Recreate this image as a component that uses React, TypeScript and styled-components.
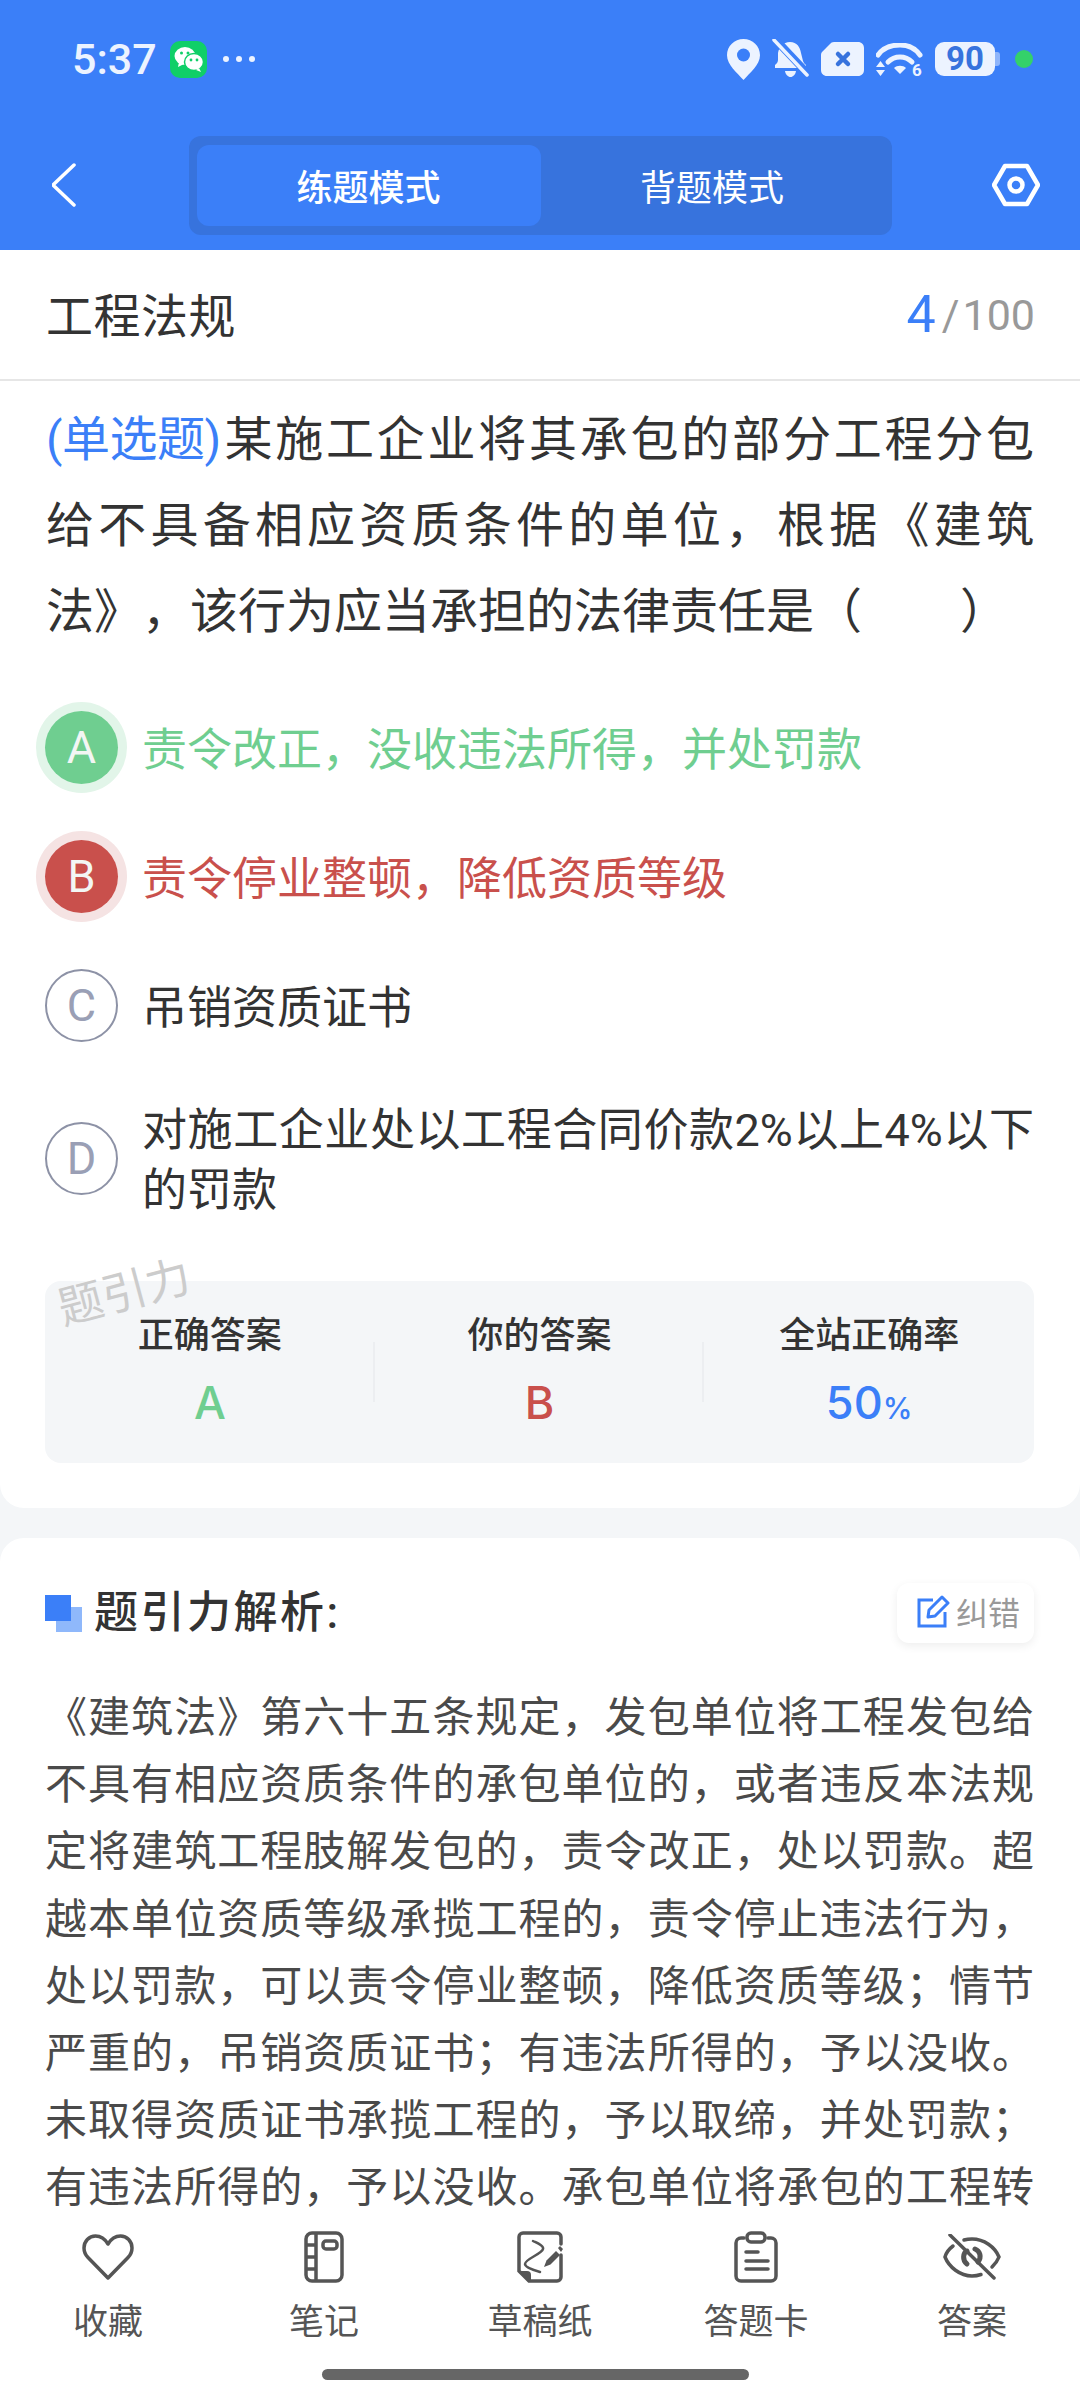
import React from 'react'
import styled, { createGlobalStyle } from 'styled-components'

const BLUE = '#3b7ff8'
const GREEN = '#6fce90'
const RED = '#c9504c'
const INK = '#333333'
const ICON_LIGHT = '#ecf3ff'

const GlobalStyle = createGlobalStyle`
  html, body {
    margin: 0;
    padding: 0;
    background: #f4f6f8;
    font-family: Roboto, "Noto Sans CJK SC", sans-serif;
    text-spacing-trim: space-all;
  }
  * {
    box-sizing: border-box;
  }
`

type OptionState = 'right' | 'wrong' | 'idle'

const options: { key: string; text: string; state: OptionState }[] = [
  { key: 'A', text: '责令改正，没收违法所得，并处罚款', state: 'right' },
  { key: 'B', text: '责令停业整顿，降低资质等级', state: 'wrong' },
  { key: 'C', text: '吊销资质证书', state: 'idle' },
  { key: 'D', text: '对施工企业处以工程合同价款2%以上4%以下的罚款', state: 'idle' },
]

const analysis =
  '《建筑法》第六十五条规定，发包单位将工程发包给不具有相应资质条件的承包单位的，或者违反本法规定将建筑工程肢解发包的，责令改正，处以罚款。超越本单位资质等级承揽工程的，责令停止违法行为，处以罚款，可以责令停业整顿，降低资质等级；情节严重的，吊销资质证书；有违法所得的，予以没收。未取得资质证书承揽工程的，予以取缔，并处罚款；有违法所得的，予以没收。承包单位将承包的工程转'

export default function App() {
  return (
    <Page>
      <GlobalStyle />
      <Header>
        <StatusBar>
          <StatusLeft>
            <Clock>5:37</Clock>
            <WeChatBadge>
              <svg width="30" height="26" viewBox="0 0 30 26">
                <ellipse cx="11" cy="10" rx="10.5" ry="9" fill="#fff" />
                <path d="M5 16l-1 5 6-3z" fill="#fff" />
                <ellipse cx="20" cy="16" rx="9.5" ry="8.5" fill="#fff" stroke="#10cf68" strokeWidth="1.5" />
                <path d="M25 22l2 4-5-2z" fill="#fff" />
                <circle cx="7.5" cy="7" r="1.5" fill="#10cf68" />
                <circle cx="14" cy="7" r="1.5" fill="#10cf68" />
                <circle cx="17" cy="14" r="1.4" fill="#10cf68" />
                <circle cx="23" cy="14" r="1.4" fill="#10cf68" />
              </svg>
            </WeChatBadge>
            <Dots>
              <i />
              <i />
              <i />
            </Dots>
          </StatusLeft>
          <StatusRight>
            <svg width="33" height="41" viewBox="0 0 33 41">
              <path
                d="M16.5 0C7.4 0 0 7.2 0 16.2 0 26 10.500 34 16.500 41 22.500 34 33 26 33 16.200 33 7.200 25.600 0 16.500 0z"
                fill={ICON_LIGHT}
              />
              <circle cx="16.500" cy="16" r="6.500" fill={BLUE} />
            </svg>
            <svg width="37" height="40" viewBox="0 0 37 40">
              <path
                d="M18 3c7 0 10 5 11 11l2 8c.6 2 2 3 3 4v3H3v-3c1.500-1 3-3 3-5V14C7 8 11 3 18 3z"
                fill={ICON_LIGHT}
              />
              <path d="M13 32h11c-.5 3.500-3 6-5.500 6S13.500 35.500 13 32z" fill={ICON_LIGHT} />
              <path d="M2 -1L37 36" stroke={BLUE} strokeWidth="8" />
              <path d="M2 1L35 36" stroke={ICON_LIGHT} strokeWidth="3.500" strokeLinecap="round" />
            </svg>
            <svg width="43" height="34" viewBox="0 0 43 34">
              <path
                d="M9 2C10 .8 11 0 13 0h24c3.500 0 6 2.500 6 6v22c0 3.500-2.500 6-6 6H6c-3.500 0-6-2.500-6-6V13c0-1.500.5-2.500 1.500-3.500z"
                fill={ICON_LIGHT}
              />
              <path
                d="M17 12l10 10M27 12L17 22"
                stroke="#3773dd"
                strokeWidth="4.500"
                strokeLinecap="round"
              />
            </svg>
            <svg width="47" height="33" viewBox="0 0 47 33">
              <path d="M2 12C7 5 15 2 24 2s15 3 20 10" fill="none" stroke={ICON_LIGHT} strokeWidth="5" strokeLinecap="round" />
              <path d="M12 19c3-3 7-5 12-5s9 2 12 5" fill="none" stroke={ICON_LIGHT} strokeWidth="5" strokeLinecap="round" />
              <path d="M18 25c3-3 9-3 12 0l-6 6z" fill={ICON_LIGHT} />
              <path d="M4 18l4.500 6h-9zM4 33l4.500-6h-9z" transform="translate(0.500 0)" fill={ICON_LIGHT} />
              <text x="36" y="33" fontFamily="Roboto, sans-serif" fontSize="17" fontWeight="700" fill={ICON_LIGHT}>
                6
              </text>
            </svg>
            <BatteryWrap>
              <Battery>90</Battery>
              <BatteryNub />
            </BatteryWrap>
            <GreenDot />
          </StatusRight>
        </StatusBar>
        <NavBar>
          <NavIcon>
            <svg width="24" height="44" viewBox="0 0 24 44">
              <path d="M22 2L1 22l21 20" fill="none" stroke="#fff" strokeWidth="3.500" strokeLinecap="round" strokeLinejoin="round" />
            </svg>
          </NavIcon>
          <Tabs>
            <Tab $active>练题模式</Tab>
            <Tab>背题模式</Tab>
          </Tabs>
          <NavIcon>
            <svg width="48" height="44" viewBox="0 0 48 44">
              <path d="M13 3h22l11 19-11 19H13L2 22z" fill="none" stroke="#fff" strokeWidth="4.500" strokeLinejoin="round" />
              <circle cx="24" cy="22" r="6.500" fill="none" stroke="#fff" strokeWidth="4.500" />
            </svg>
          </NavIcon>
        </NavBar>
      </Header>

      <Scroller>
        <QuestionCard>
          <SubjectRow>
            <SubjectTitle>工程法规</SubjectTitle>
            <Counter>
              <CounterNow>4</CounterNow>
              <CounterRest>
                <CounterSlash>/</CounterSlash>100
              </CounterRest>
            </Counter>
          </SubjectRow>
          <QuestionText>
            <QuestionType>(单选题)</QuestionType>
            某施工企业将其承包的部分工程分包给不具备相应资质条件的单位，根据《建筑法》，该行为应当承担的法律责任是（&emsp;&emsp;）
          </QuestionText>
          <OptionList>
            {options.map((o) => (
              <OptionRow key={o.key}>
                <OptionBadge $state={o.state}>{o.key}</OptionBadge>
                <OptionText $state={o.state}>{o.text}</OptionText>
              </OptionRow>
            ))}
          </OptionList>
          <Stats>
            <Watermark>题引力</Watermark>
            <StatCell>
              <StatLabel>正确答案</StatLabel>
              <StatValue $color={GREEN}>A</StatValue>
            </StatCell>
            <StatCell>
              <StatLabel>你的答案</StatLabel>
              <StatValue $color={RED}>B</StatValue>
            </StatCell>
            <StatCell>
              <StatLabel>全站正确率</StatLabel>
              <StatValue $color={BLUE}>
                50<Percent>%</Percent>
              </StatValue>
            </StatCell>
          </Stats>
        </QuestionCard>

        <AnalysisCard>
          <AnalysisHead>
            <HeadLeft>
              <svg width="37" height="37" viewBox="0 0 37 37">
                <rect x="11" y="12" width="26" height="25" fill="#8fb8fb" />
                <rect x="0" y="0" width="26" height="26" fill={BLUE} />
              </svg>
              <HeadTitle>题引力解析:</HeadTitle>
            </HeadLeft>
            <ReportButton>
              <svg width="33" height="33" viewBox="0 0 33 33">
                <path d="M16 5H2v26h26V17" fill="none" stroke={BLUE} strokeWidth="3" />
                <path d="M11 22l1-7L25 2l6 6-13 13z" fill="none" stroke={BLUE} strokeWidth="3" strokeLinejoin="round" />
              </svg>
              纠错
            </ReportButton>
          </AnalysisHead>
          <AnalysisText>{analysis}</AnalysisText>
        </AnalysisCard>
      </Scroller>

      <BottomBar>
        <BottomItems>
          <BottomItem>
            <IconSlot>
              <svg width="52" height="46" viewBox="0 0 52 46">
                <path
                  d="M26 10C23 5 18 2 13.500 2 7 2 2 7.500 2 14c0 4 1.500 7 4 9.500L26 44l20-20.500c2.500-2.500 4-5.500 4-9.500 0-6.500-5-12-11.500-12C34 2 29 5 26 10z"
                  fill="none"
                  stroke="#555"
                  strokeWidth="3.500"
                  strokeLinejoin="round"
                />
              </svg>
            </IconSlot>
            <BottomLabel>收藏</BottomLabel>
          </BottomItem>
          <BottomItem>
            <IconSlot>
              <svg width="40" height="52" viewBox="0 0 40 52">
                <rect x="2" y="2" width="36" height="48" rx="6" fill="none" stroke="#555" strokeWidth="3.500" />
                <path d="M12 2v48M2 14h10M2 26h10M2 38h10" fill="none" stroke="#555" strokeWidth="3.500" />
                <rect x="19" y="10" width="14" height="8" rx="3" fill="none" stroke="#555" strokeWidth="3.500" />
              </svg>
            </IconSlot>
            <BottomLabel>笔记</BottomLabel>
          </BottomItem>
          <BottomItem>
            <IconSlot>
              <svg width="46" height="52" viewBox="0 0 46 52">
                <path d="M44 13V6a4 4 0 0 0-4-4H6a4 4 0 0 0-4 4v34l10 10h28a4 4 0 0 0 4-4V24" fill="none" stroke="#555" strokeWidth="3.500" strokeLinecap="round" />
                <path d="M2 40h8a4 4 0 0 1 4 4v7z" fill="#555" />
                <path d="M16 10c6 3 11 5 10 8-1 5-18 10-18 15 0 3 8 6 15 8" fill="none" stroke="#555" strokeWidth="2.500" strokeLinecap="round" />
                <path d="M27 36l2.500-6.500L39 20l4 4-9.500 9.500z" fill="#555" />
                <path d="M41 17l2-2 3 3-2 3z" fill="#555" />
              </svg>
            </IconSlot>
            <BottomLabel>草稿纸</BottomLabel>
          </BottomItem>
          <BottomItem>
            <IconSlot>
              <svg width="44" height="52" viewBox="0 0 44 52">
                <path d="M10 7H7a5 5 0 0 0-5 5v33a5 5 0 0 0 5 5h30a5 5 0 0 0 5-5V12a5 5 0 0 0-5-5h-3" fill="none" stroke="#555" strokeWidth="3.500" strokeLinecap="round" />
                <rect x="13" y="2" width="18" height="9" rx="4" fill="none" stroke="#555" strokeWidth="3.500" />
                <path d="M12 21h12M12 30h22M12 38h22" fill="none" stroke="#555" strokeWidth="3.500" strokeLinecap="round" />
              </svg>
            </IconSlot>
            <BottomLabel>答题卡</BottomLabel>
          </BottomItem>
          <BottomItem>
            <IconSlot>
              <svg width="58" height="46" viewBox="0 0 58 46">
                <path d="M10 12C6 15 3 19 2 23c4 10 15 19 27 19 3 0 6-.5 9-1.500" fill="none" stroke="#555" strokeWidth="3.500" strokeLinecap="round" />
                <path d="M21 6c2.500-.7 5-1 8-1 12 0 23 8 27 18-1.500 4-4 7-7 10" fill="none" stroke="#555" strokeWidth="3.500" strokeLinecap="round" />
                <path d="M24 17c-4 2-5 9 0 13M32 15c5 2 7 8 3 13" fill="none" stroke="#555" strokeWidth="5" strokeLinecap="round" />
                <path d="M7 1l44 43" fill="none" stroke="#555" strokeWidth="3.500" strokeLinecap="round" />
              </svg>
            </IconSlot>
            <BottomLabel>答案</BottomLabel>
          </BottomItem>
        </BottomItems>
        <HomeIndicator />
      </BottomBar>
    </Page>
  )
}

const Page = styled.div`
  width: 1080px;
  height: 2400px;
  display: flex;
  flex-direction: column;
  overflow: hidden;
  background: #f4f6f8;
`

const Header = styled.header`
  flex: 0 0 250px;
  background: ${BLUE};
`

const StatusBar = styled.div`
  height: 120px;
  padding: 0 47px 2px 72px;
  display: flex;
  align-items: center;
  justify-content: space-between;
`

const StatusLeft = styled.div`
  display: flex;
  align-items: center;
`

const Clock = styled.span`
  width: 98px;
  font-size: 43px;
  font-weight: 500;
  color: ${ICON_LIGHT};
`

const WeChatBadge = styled.div`
  width: 37px;
  height: 37px;
  border-radius: 10px;
  background: #10cf68;
  display: flex;
  align-items: center;
  justify-content: center;
`

const Dots = styled.div`
  margin-left: 16px;
  display: flex;
  gap: 7px;

  i {
    width: 6px;
    height: 6px;
    border-radius: 50%;
    background: ${ICON_LIGHT};
  }
`

const StatusRight = styled.div`
  display: flex;
  align-items: center;
  gap: 12px;
`

const BatteryWrap = styled.div`
  display: flex;
  align-items: center;
`

const Battery = styled.div`
  width: 60px;
  height: 34px;
  border-radius: 9px;
  background: ${ICON_LIGHT};
  color: #3773dd;
  font-size: 33px;
  font-weight: 700;
  line-height: 34px;
  text-align: center;
`

const BatteryNub = styled.div`
  width: 5px;
  height: 14px;
  border-radius: 0 3px 3px 0;
  background: #8fb5fa;
`

const GreenDot = styled.div`
  margin-left: 3px;
  width: 18px;
  height: 18px;
  border-radius: 50%;
  background: #34d16a;
`

const NavBar = styled.div`
  height: 130px;
  padding: 0 40px;
  display: flex;
  align-items: center;
  justify-content: space-between;
`

const NavIcon = styled.div`
  width: 48px;
  display: flex;
  justify-content: center;
`

const Tabs = styled.div`
  width: 703px;
  height: 99px;
  padding: 9px 8px;
  border-radius: 12px;
  background: #3773dd;
  display: grid;
  grid-template-columns: 344px 1fr;
`

const Tab = styled.div<{ $active?: boolean }>`
  border-radius: 12px;
  background: ${(p) => (p.$active ? BLUE : 'transparent')};
  color: #fff;
  font-size: 36px;
  font-weight: ${(p) => (p.$active ? 500 : 400)};
  display: flex;
  align-items: center;
  justify-content: center;
`

const Scroller = styled.main`
  flex: 1;
  min-height: 0;
  overflow: hidden;
`

const QuestionCard = styled.section`
  background: #fff;
  border-radius: 0 0 24px 24px;
  padding-bottom: 45px;
`

const SubjectRow = styled.div`
  height: 131px;
  padding: 0 45px 4px 46px;
  border-bottom: 2px solid #e6e6e6;
  display: flex;
  align-items: center;
  justify-content: space-between;
`

const SubjectTitle = styled.h2`
  margin: 0;
  font-size: 47px;
  font-weight: 400;
  letter-spacing: 0.5px;
  color: ${INK};
`

const Counter = styled.div`
  display: flex;
  align-items: baseline;
`

const CounterNow = styled.span`
  font-size: 52px;
  color: ${BLUE};
  transform: translateY(2px);
`

const CounterRest = styled.span`
  font-size: 43px;
  color: #999;
`

const CounterSlash = styled.span`
  margin: 0 3px 0 6px;
`

const QuestionText = styled.p`
  margin: 16px 0 0;
  padding: 0 46px;
  font-size: 48px;
  line-height: 86px;
  text-align: justify;
  color: ${INK};
`

const QuestionType = styled.span`
  display: inline-block;
  margin-right: 1px;
  letter-spacing: -0.5px;
  color: ${BLUE};
`

const OptionList = styled.div`
  margin-top: 56px;
  padding: 0 46px 0 45px;
  display: flex;
  flex-direction: column;
  gap: 56px;
`

const OptionRow = styled.div`
  min-height: 73px;
  display: flex;
  align-items: center;
  gap: 24px;
`

const stateColor = (s: OptionState) => (s === 'right' ? GREEN : s === 'wrong' ? RED : INK)

const OptionBadge = styled.div<{ $state: OptionState }>`
  flex: 0 0 73px;
  height: 73px;
  border-radius: 50%;
  display: flex;
  align-items: center;
  justify-content: center;
  font-size: 45px;
  color: ${(p) => (p.$state === 'idle' ? '#9a9fb5' : '#f3f6f4')};
  background: ${(p) => (p.$state === 'idle' ? '#fff' : stateColor(p.$state))};
  border: ${(p) => (p.$state === 'idle' ? '2px solid #8d92a6' : 'none')};
  box-shadow: ${(p) =>
    p.$state === 'right'
      ? '0 0 0 9px #e2f5e9'
      : p.$state === 'wrong'
        ? '0 0 0 9px #f5e3e3'
        : 'none'};
`

const OptionText = styled.div<{ $state: OptionState }>`
  flex: 1;
  padding-top: 3px;
  margin-bottom: -3px;
  font-size: 45px;
  line-height: 60px;
  text-align: justify;
  color: ${(p) => stateColor(p.$state)};
`

const Stats = styled.div`
  position: relative;
  margin: 63px 46px 0 45px;
  height: 182px;
  padding-top: 30px;
  border-radius: 16px;
  background: #f4f6f8;
  display: grid;
  grid-template-columns: repeat(3, 1fr);
`

const Watermark = styled.div`
  position: absolute;
  left: 12px;
  top: -16px;
  font-size: 45px;
  line-height: 56px;
  color: #cccccc;
  transform: rotate(-15deg);
`

const StatCell = styled.div`
  position: relative;
  text-align: center;

  & + &::before {
    content: '';
    position: absolute;
    left: -2px;
    top: 31px;
    height: 60px;
    width: 2px;
    background: #eceef1;
  }
`

const StatLabel = styled.div`
  font-size: 36px;
  font-weight: 500;
  line-height: 50px;
  color: ${INK};
`

const StatValue = styled.div<{ $color: string }>`
  margin-top: 12px;
  font-family: Inter, sans-serif;
  font-size: 45px;
  font-weight: 500;
  line-height: 60px;
  color: ${(p) => p.$color};
`

const Percent = styled.span`
  font-size: 30px;
`

const AnalysisCard = styled.section`
  margin-top: 30px;
  padding: 45px 46px 0 45px;
  background: #fff;
  border-radius: 24px 24px 0 0;
`

const AnalysisHead = styled.div`
  display: flex;
  align-items: center;
  justify-content: space-between;
`

const HeadLeft = styled.div`
  display: flex;
  align-items: center;
  gap: 12px;
`

const HeadTitle = styled.h3`
  margin: 0;
  font-size: 44px;
  font-weight: 500;
  line-height: 50px;
  letter-spacing: 2.5px;
  color: ${INK};
`

const ReportButton = styled.div`
  width: 137px;
  height: 60px;
  padding: 0 0 4px 20px;
  border-radius: 12px;
  background: #fff;
  box-shadow: 0 3px 10px rgba(0, 0, 0, 0.07);
  display: flex;
  align-items: center;
  gap: 6px;
  font-size: 32px;
  color: #999;
`

const AnalysisText = styled.p`
  margin: 41px 0 0;
  font-size: 42px;
  line-height: 67.2px;
  text-align: justify;
  text-align-last: justify;
  color: #4a4a4a;
`

const BottomBar = styled.footer`
  flex: 0 0 185px;
  background: #fff;
  display: flex;
  flex-direction: column;
  align-items: center;
`

const BottomItems = styled.nav`
  align-self: stretch;
  display: grid;
  grid-template-columns: repeat(5, 216px);
`

const BottomItem = styled.div`
  display: flex;
  flex-direction: column;
  align-items: center;
`

const IconSlot = styled.div`
  height: 72px;
  padding-top: 12px;
  display: flex;
  align-items: center;
  justify-content: center;
`

const BottomLabel = styled.div`
  margin-top: 11px;
  font-size: 35px;
  line-height: 50px;
  color: #555;
`

const HomeIndicator = styled.div`
  margin: 21px 9px 0 0;
  width: 427px;
  height: 11px;
  border-radius: 6px;
  background: #666;
`
